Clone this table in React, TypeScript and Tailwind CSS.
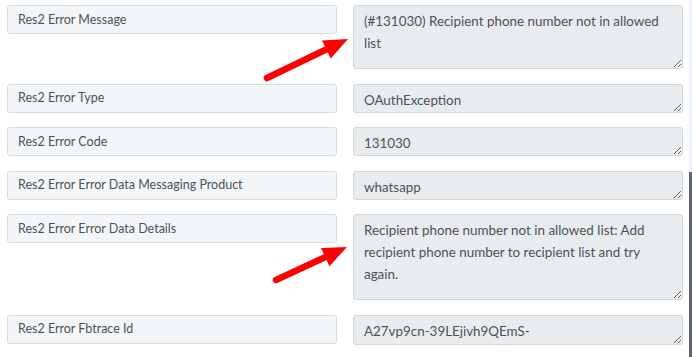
import React from "react";

type Row = { label: string; value: string; h: string };

const rows: Row[] = [
  { label: "Res2 Error Message", value: "(#131030) Recipient phone number not in allowed list", h: "h-[64px]" },
  { label: "Res2 Error Type", value: "OAuthException", h: "h-[29px]" },
  { label: "Res2 Error Code", value: "131030", h: "h-[29px]" },
  { label: "Res2 Error Error Data Messaging Product", value: "whatsapp", h: "h-[29px]" },
  {
    label: "Res2 Error Error Data Details",
    value: "Recipient phone number not in allowed list: Add recipient phone number to recipient list and try again.",
    h: "h-[86px]",
  },
  { label: "Res2 Error Fbtrace Id", value: "A27vp9cn-39LEjivh9QEmS-", h: "h-[30px]" },
];

function Arrow({ x1, y1, x2, y2 }: { x1: number; y1: number; x2: number; y2: number }) {
  const dx = x2 - x1;
  const dy = y2 - y1;
  const len = Math.hypot(dx, dy);
  const ux = dx / len;
  const uy = dy / len;
  const headLen = 24;
  const headHalf = 10;
  const bx = x2 - ux * headLen;
  const by = y2 - uy * headLen;
  const px = -uy;
  const py = ux;
  const pts = `${x2},${y2} ${bx + px * headHalf},${by + py * headHalf} ${bx - px * headHalf},${by - py * headHalf}`;
  return (
    <g>
      <line x1={x1} y1={y1} x2={bx + ux * 2} y2={by + uy * 2} stroke="#ff0000" strokeWidth={6.5} strokeLinecap="round" />
      <polygon points={pts} fill="#ff0000" />
    </g>
  );
}

export default function App() {
  return (
    <div
      className="relative flex w-[692px] h-[357px] overflow-hidden bg-white text-[12.5px] text-[#4d5156]"
      style={{ fontFamily: "Lato, 'Open Sans', sans-serif" }}
    >
      <div className="flex flex-col gap-[14.5px] pt-[5px] pl-[7px] w-[689px]">
        {rows.map((r) => (
          <div key={r.label} className="grid grid-cols-[330px_330px] gap-[16px] items-start">
            <div className="h-[29px] flex items-center pt-[1px] px-[10px] rounded-[3px] border border-[#d6dbe1] bg-[#f3f6f9] whitespace-nowrap">
              {r.label}
            </div>
            <textarea
              readOnly
              value={r.value}
              className={`${r.h} w-[330px] block rounded-[3px] border border-[#d3d7dc] bg-[#e9ecef] px-[10px] pt-[4px] leading-[22px] text-[13.4px] text-[#4d5156] outline-none overflow-hidden`}
              style={{ fontFamily: "Lato, 'Open Sans', sans-serif" }}
            />
          </div>
        ))}
      </div>
      <div className="w-[3px] h-full bg-[#eef3f9] flex flex-col">
        <div className="h-[172px]" />
        <div className="flex-1 bg-[#62666c]" />
      </div>
      <svg className="absolute left-0 top-0 pointer-events-none" width={692} height={357}>
        <Arrow x1={267} y1={78} x2={348} y2={39} />
        <Arrow x1={276} y1={280} x2={347} y2={247} />
      </svg>
    </div>
  );
}
